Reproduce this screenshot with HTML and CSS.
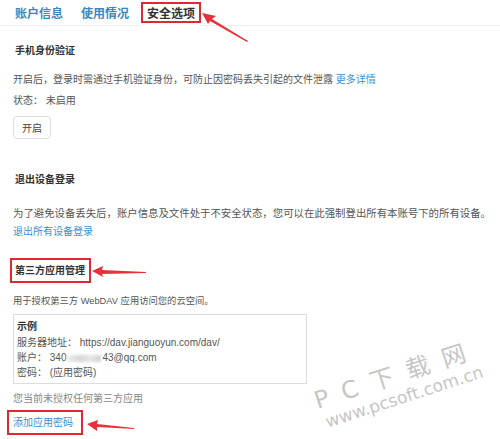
FILE: index.html
```html
<!DOCTYPE html>
<html lang="zh-CN">
<head>
<meta charset="utf-8">
<title>安全选项</title>
<link rel="stylesheet" href="styles.css">
</head>
<body>
<div class="page">
  <nav class="tabs">
    <a class="tab">账户信息</a>
    <a class="tab">使用情况</a>
    <a class="tab active"><span class="mark">安全选项</span></a>
  </nav>

  <section class="sec sec-phone">
    <h3 class="title">手机身份验证</h3>
    <p class="desc d1">开启后，登录时需通过手机验证身份，可防止因密码丢失引起的文件泄露 <a class="link">更多详情</a></p>
    <p class="desc status">状态： 未启用</p>
    <button class="btn">开启</button>
  </section>

  <section class="sec sec-logout">
    <h3 class="title">退出设备登录</h3>
    <p class="desc d2">为了避免设备丢失后，账户信息及文件处于不安全状态，您可以在此强制登出所有本账号下的所有设备。</p>
    <a class="link block">退出所有设备登录</a>
  </section>

  <section class="sec sec-apps">
    <h3 class="title boxed"><span class="mark mark-title">第三方应用管理</span></h3>
    <p class="desc d3">用于授权第三方 WebDAV 应用访问您的云空间。</p>
    <div class="example">
      <div class="ex-title">示例</div>
      <div class="ex-line">服务器地址： https://dav.jianguoyun.com/dav/</div>
      <div class="ex-line">账户： 340<span class="blur"></span>43@qq.com</div>
      <div class="ex-line">密码： (应用密码)</div>
    </div>
    <p class="desc muted">您当前未授权任何第三方应用</p>
    <div class="add"><a class="link mark mark-add">添加应用密码</a></div>
  </section>

  <svg class="arrow arrow-tab" width="60" height="34" viewBox="0 0 60 34">
    <polygon points="3,3 17,6 13,9 49,31 48,32 11,11 9,14" fill="#e8313a"/>
  </svg>
  <svg class="arrow arrow-title" width="60" height="14" viewBox="0 0 60 14">
    <polygon points="1,6 12,1 11,5 55,7 55,8 11,9 12,12" fill="#e8313a"/>
  </svg>
  <svg class="arrow arrow-add" width="52" height="16" viewBox="0 0 52 16">
    <polygon points="1,4 12,0 11,4 48,8 48,9 11,7 11,11" fill="#e8313a"/>
  </svg>

  <div class="watermark">
    <div class="wm-big">P C 下 载 网</div>
    <div class="wm-url">www.pcsoft.com.cn</div>
  </div>
</div>
</body>
</html>
```

FILE: styles.css
```css
* { box-sizing: border-box; }
html, body { margin: 0; padding: 0; background: #fff; }
body {
  font-family: "Liberation Sans", "Noto Sans CJK SC", sans-serif;
  font-size: 10px;
  color: #555;
  width: 500px;
  height: 439px;
  overflow: hidden;
}
.page { position: relative; width: 500px; height: 439px; overflow: hidden; }

.tabs {
  display: flex;
  align-items: flex-end;
  height: 26px;
  border-bottom: 1px solid #eeeeee;
  padding-left: 15px;
  font-family: "Noto Sans CJK SC", sans-serif;
}
.tab {
  font-size: 12px;
  font-weight: bold;
  color: #3a86c6;
  line-height: 16px;
  margin-right: 18px;
  padding-bottom: 4px;
}
.tab.active {
  color: #333;
  margin-left: -6px;
  padding: 2px 0 3px 0;
  margin-bottom: -1px;
  background: #fff;
}
.mark { border: 2px solid #dc2a33; }
.tab .mark { display: inline-block; padding: 1px 4px 0 4px; line-height: 16px; }

.sec { padding-left: 13px; }
.title {
  margin: 0;
  padding-left: 2px;
  font-size: 10px;
  font-weight: bold;
  color: #333;
  line-height: 15px;
}
.desc { margin: 0; line-height: 15px; white-space: nowrap; }
.link { color: #3a8fd0; text-decoration: none; }
.link.block { display: block; line-height: 15px; }

.sec-phone .title { margin-top: 17px; }
.d1 { margin-top: 14px; }
.status { margin-top: 6px; }
.btn {
  display: block;
  margin-top: 8px;
  width: 38px;
  height: 23px;
  padding: 0;
  border: 1px solid #dedede;
  border-radius: 4px;
  background: #fff;
  color: #444;
  font-family: inherit;
  font-size: 10px;
}

.sec-logout .title { margin-top: 33px; }
.d2 { margin-top: 18px; font-size: 10.4px; font-family: "Noto Sans CJK SC", sans-serif; }
.sec-logout .link.block { margin-top: 4px; }

.title.boxed { display: flex; padding-left: 0; margin-top: 19px; }
.mark-title { margin-left: -3px; padding: 3px 4px 3px 3px; line-height: 15px; }
.d3 { margin-top: 11px; font-size: 9.3px; }

.example {
  margin-top: 5px;
  width: 294px;
  border: 1px solid #dddddd;
  padding: 4px 3px 3px 3px;
  color: #555;
}
.ex-title { font-weight: bold; color: #333; line-height: 15px; margin-bottom: 1px; }
.ex-line { line-height: 15px; }
.blur {
  display: inline-block;
  width: 34px;
  height: 7px;
  margin: 0 1px;
  background: linear-gradient(90deg, #eee, #d6d6d6 40%, #e6e6e6 70%, #cfcfcf);
  filter: blur(1.5px);
  vertical-align: middle;
}
.muted { color: #888; margin-top: 7px; }
.add { display: flex; margin-top: 4px; }
.mark-add { margin-left: -6px; padding: 3px 8px 3px 4px; line-height: 15px; }

.arrow { position: absolute; }
.arrow-tab { left: 199px; top: 10px; }
.arrow-title { left: 91px; top: 265px; }
.arrow-add { left: 86px; top: 420px; }

.watermark {
  position: absolute;
  left: 311px;
  top: 389px;
  transform: rotate(-18deg);
  transform-origin: left top;
  color: #c6c6c6;
  font-family: "DejaVu Sans", "Noto Sans CJK SC", sans-serif;
  pointer-events: none;
  white-space: nowrap;
}
.wm-big { font-size: 24px; letter-spacing: 3px; line-height: 26px; }
.wm-url { font-size: 17px; line-height: 20px; margin-left: 4px; }
```
